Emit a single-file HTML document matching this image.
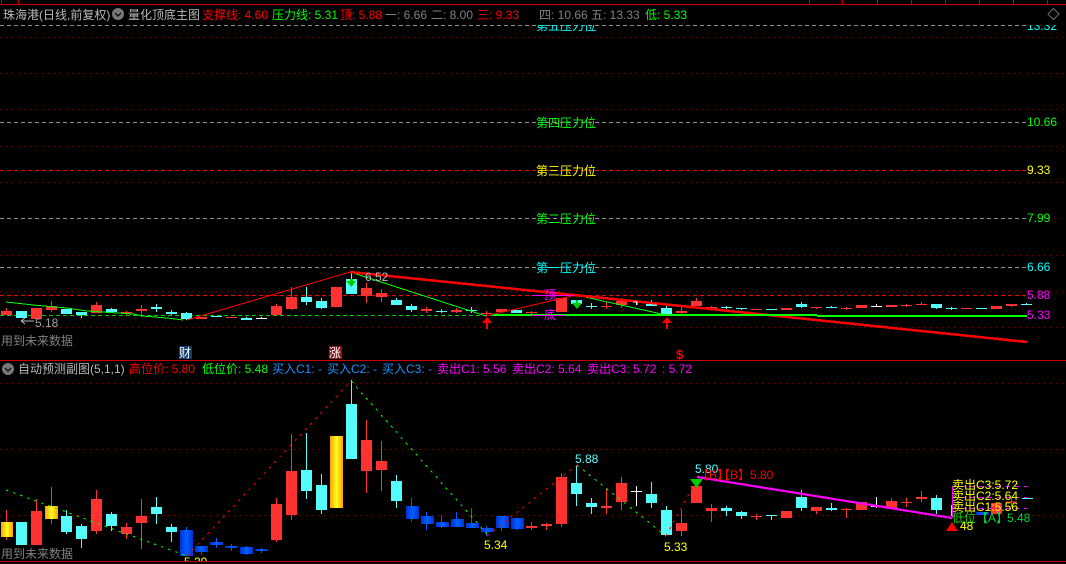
<!DOCTYPE html>
<html><head><meta charset="utf-8"><title>珠海港</title>
<style>
html,body{margin:0;padding:0;background:#000;width:1066px;height:564px;overflow:hidden}
svg{display:block;position:absolute;left:0;top:0}
text{font-family:"Liberation Sans","WenQuanYi Zen Hei","Noto Sans CJK SC",sans-serif;font-size:12px}
.r{fill:#f00}.g{fill:#0f0}.h{fill:#808080}.l{fill:#b8b8b8}.b{fill:#1e90ff}.m{fill:#f0f}.c{fill:#0ff}.y{fill:#ff0}
</style></head><body>
<svg width="1066" height="564" viewBox="0 0 1066 564">
<defs>
<linearGradient id="gold"><stop offset="0" stop-color="#ffa000"/><stop offset=".5" stop-color="#ffff20"/><stop offset="1" stop-color="#ffa000"/></linearGradient>
<linearGradient id="blue"><stop offset="0" stop-color="#0030d8"/><stop offset=".5" stop-color="#0060ff"/><stop offset="1" stop-color="#0030d8"/></linearGradient>
<clipPath id="ct"><rect x="0" y="25" width="1066" height="20"/></clipPath>
<clipPath id="cb"><rect x="0" y="540" width="1066" height="21"/></clipPath>
</defs>
<rect width="1066" height="564" fill="#000"/>
<!-- frame -->
<g shape-rendering="crispEdges" stroke="#c80000" fill="none">
<path d="M0 4.500H1066M0 360.500H1066M0 561.500H1066"/>
<path d="M1.500 0V4M18.500 0V4M809.500 0V4M842.500 0V4M877.500 0V4M911.500 0V4M945.500 0V4M979.500 0V4M1013.500 0V4M1047.500 0V4"/>
</g>
<!-- grid -->
<g shape-rendering="crispEdges" fill="none">
<path stroke="#800000" stroke-dasharray="1 5" d="M0 37.500H1066M0 73.500H1066M0 109.500H1066M0 146.500H1066M0 182.500H1066M1030 218.500H1066M0 255.500H1066M0 291.500H1066M0 327.500H1066M0 383.500H1066M0 449.500H1066M0 515.500H1066"/>
<path stroke="#909090" stroke-dasharray="4 3" d="M0 25.500H1027M0 122.500H1027M0 218.500H1027M0 267.500H1027"/>
<path stroke="#f00" stroke-dasharray="4 3" d="M0 170.500H1027M0 295.500H1027"/>
<path stroke="#0c0" stroke-dasharray="4 3" d="M0 315.500H1027"/>
</g>
<!-- top wicks + bodies -->
<g shape-rendering="crispEdges" fill="none">
<path stroke="#ff3232" d="M6.500 308V315M51.500 301V312M96.500 302V313M141.500 305V317M126.500 311V315M276.500 304V315M291.500 287V310M336.500 287V307M366.500 283V303M381.500 289V302M426.500 307V313M456.500 308V313M486.500 311V316M531.500 311V314M606.500 302V309M621.500 298V308M681.500 307V314M696.500 298V306M711.500 306V310M816.500 307V309M846.500 307V310M906.500 304V307M921.500 302V305M1011.500 304V307"/>
<path stroke="#54fcfc" d="M81.500 312V318M111.500 308V312M156.500 304V312M171.500 310V315M186.500 312V320M246.500 317V320M306.500 287V305M321.500 298V309M351.500 272V294M396.500 298V305M411.500 304V312M441.500 309V313M471.500 307V313M591.500 303V309M651.500 300V306M666.500 306V314M726.500 306V309M741.500 308V310M801.500 302V308M831.500 306V308M936.500 304V309M951.500 307V310M1026.500 303V305"/>
<path stroke="#fff" d="M876.500 304V307M636.500 302V305M261.500 317V319"/>
<path stroke="#ff3232" stroke-width="11" d="M6.500 311V315M36.500 308V319M51.500 306V310M96.500 305V313M126.500 312V314M141.500 309V311M201.500 317V319M231.500 317V318M276.500 306V315M291.500 297V309M336.500 287V307M366.500 288V296M381.500 293V297M426.500 309V311M456.500 310V312M486.500 313V314M501.500 309V312M531.500 312V313M561.500 298V312M606.500 306V307M621.500 301V305M681.500 311V313M696.500 301V306M711.500 307V309M756.500 309V310M786.500 308V310M816.500 307V308M846.500 308V309M861.500 305V308M891.500 305V307M906.500 305V306M921.500 304V305M966.500 308V309M996.500 306V309M1011.500 304V306"/>
<path stroke="#54fcfc" stroke-width="11" d="M21.500 311V318M66.500 309V314M81.500 312V315M111.500 309V312M156.500 307V309M171.500 312V314M186.500 313V319M216.500 316V317M246.500 318V320M306.500 297V302M321.500 301V308M351.500 279V294M396.500 300V305M411.500 306V310M441.500 311V312M471.500 310V311M516.500 310V313M576.500 300V304M591.500 306V307M651.500 304V306M666.500 308V314M726.500 307V308M741.500 308V309M771.500 309V310M801.500 304V307M831.500 307V308M936.500 304V308M951.500 308V309M981.500 308V309M1026.500 304V305"/>
<path stroke="#fff" stroke-width="11" d="M261.500 318V319M876.500 306V307"/>
</g>
<!-- top lines -->
<g fill="none" shape-rendering="crispEdges">
<polyline stroke="#0f0" stroke-width="1" points="6,302 33,305 67,308 87,311 133,314 143,316 167,318 183,320"/>
<polyline stroke="#f00" stroke-width="1" points="187,320 350,272"/>
<polyline stroke="#0f0" stroke-width="1" points="350,272 486,316"/>
<polyline stroke="#f00" stroke-width="1" points="486,316 576,295"/>
<polyline stroke="#0f0" stroke-width="1" points="576,295 666,315"/>
<polyline stroke="#f00" stroke-width="2.500" points="350,272 720,310 1027,342"/>
<rect x="493" y="314" width="324" height="2" fill="#0f0"/>
<rect x="817" y="315" width="210" height="2" fill="#0f0"/>
<path stroke="#f0f" d="M532 295.500H574M532 315.500H566"/>
</g>
<!-- arrows -->
<path fill="#f00" d="M487 317L492 323H488V329H486V323H482Z"/>
<path fill="#f00" d="M667 317L672 323H668V329H666V323H662Z"/>
<path fill="#0c0" d="M350 279H353V281H356L351.500 287L346 281H350Z"/>
<path fill="#0c0" d="M576 300H578V303H582L577 309L572 303H576Z"/>
<path stroke="#fff" fill="none" shape-rendering="crispEdges" d="M633 302H637V305"/>
<!-- top labels -->
<text x="3" y="19" class="l">珠海港(日线,前复权)</text>
<circle cx="118" cy="14" r="6" fill="#787878"/><path d="M115 13l3 3 3-3" stroke="#111" stroke-width="1.400" fill="none"/>
<text x="128" y="19" class="l">量化顶底主图</text>
<text x="202" y="19" class="r">支撑线: 4.60</text>
<text x="272" y="19" class="g">压力线: 5.31</text>
<text x="340" y="19" class="r">顶: 5.88</text>
<text x="385" y="19" class="h">一: 6.66</text>
<text x="431" y="19" class="h">二: 8.00</text>
<text x="477" y="19" class="r">三: 9.33</text>
<text x="539" y="19" class="h">四: 10.66</text>
<text x="591" y="19" class="h">五: 13.33</text>
<text x="645" y="19" class="g">低: 5.33</text>
<path d="M1053.500 8.500l5.500 5.500-5.500 5.500-5.500-5.500z" stroke="#707070" fill="none"/>
<g clip-path="url(#ct)"><text x="536" y="30" class="c">第五压力位</text><text x="1027" y="30" class="c">13.32</text></g>
<text x="536" y="127" class="g">第四压力位</text><text x="1027" y="126" class="g">10.66</text>
<text x="536" y="175" class="y">第三压力位</text><text x="1027" y="174" class="y">9.33</text>
<text x="536" y="223" class="g">第二压力位</text><text x="1027" y="222" class="g">7.99</text>
<text x="536" y="272" class="c">第一压力位</text><text x="1027" y="271" class="c">6.66</text>
<text x="1027" y="299" class="m">5.88</text>
<text x="1027" y="319" class="m">5.33</text>
<text x="544" y="299" class="m">顶</text>
<text x="544" y="319" class="m">底</text>
<text x="365" y="281" fill="#b8b8b8">6.52</text>
<path d="M21 321H34M21 321l4-3M21 321l4 3" stroke="#b8b8b8" fill="none"/>
<text x="35" y="327" fill="#a0a0a0">5.18</text>
<text x="1" y="345" class="h">用到未来数据</text>
<rect x="179" y="346" width="13" height="13" fill="#103c70"/><text x="179" y="357" fill="#fff">财</text>
<rect x="329" y="346" width="13" height="13" fill="#8a1414"/><text x="329" y="357" fill="#fff">涨</text>
<text x="676" y="359" fill="#f00" font-weight="bold" style="font-size:13px">$</text>
<!-- bottom candles -->
<g shape-rendering="crispEdges" fill="none">
<path stroke="#ff3232" d="M6.500 510V540M36.500 499V545M51.500 487V524M96.500 490V534M126.500 523V539M141.500 499V549M276.500 498V542M291.500 434V520M366.500 420V493M381.500 441V491M531.500 522V530M546.500 523V530M561.500 473V527M606.500 489V514M621.500 477V510M681.500 510V536M711.500 504V522M756.500 514V520M816.500 507V514M846.500 508V518M891.500 498V509M906.500 498V507M921.500 491V502M1011.500 497V507"/>
<path stroke="#54fcfc" d="M66.500 510V534M81.500 524V548M111.500 512V531M156.500 497V524M171.500 524V542M306.500 433V499M321.500 474V514M351.500 380V459M396.500 475V508M576.500 465V506M591.500 498V514M651.500 482V508M666.500 506V535M726.500 506V516M741.500 511V519M771.500 515V520M801.500 490V511M831.500 503V511M936.500 495V514M951.500 505V516"/>
<path stroke="#fff" d="M636.500 486V506M876.500 497V508"/>
<path stroke="#0060ff" d="M186.500 527V556M201.500 546V555M216.500 538V548M231.500 544V551M246.500 546V555M261.500 548V553M411.500 498V522M426.500 512V530M441.500 515V528M456.500 512V527M471.500 508V528M486.500 526V536M501.500 516V531M516.500 518V530"/>
<path stroke="#ff3232" stroke-width="11" d="M36.500 511V545M96.500 499V531M126.500 527V534M141.500 516V523M276.500 504V540M291.500 471V515M366.500 440V471M381.500 461V470M531.500 526V528M546.500 524V526M561.500 477V524M606.500 506V508M621.500 483V502M681.500 523V531M696.500 486V503M711.500 508V511M756.500 516V517M786.500 511V518M816.500 507V511M846.500 509V510M861.500 502V510M891.500 501V509M906.500 502V503M921.500 497V499M996.500 503V514"/>
<path stroke="#54fcfc" stroke-width="11" d="M21.500 522V545M66.500 516V532M81.500 526V539M111.500 514V526M156.500 507V514M171.500 527V532M306.500 470V491M321.500 485V510M351.500 404V459M396.500 481V501M576.500 483V494M591.500 503V507M651.500 494V503M666.500 510V535M726.500 508V511M741.500 512V516M771.500 515V516M801.500 497V508M831.500 508V510M936.500 498V510"/>
<path stroke="#54fcfc" stroke-width="11" d="M1027.500 498V499"/>
<path stroke="#fff" stroke-width="11" d="M636.500 491V492M876.500 506V507"/>
<path stroke="#ff3232" d="M1006 502H1017"/>
<g stroke="none">
<rect x="1" y="522" width="12" height="15" fill="url(#gold)"/>
<rect x="45" y="506" width="13" height="13" fill="url(#gold)"/>
<rect x="330" y="436" width="13" height="72" fill="url(#gold)"/>
<rect x="180" y="530" width="13" height="26" fill="url(#blue)"/>
<rect x="195" y="546" width="13" height="6" fill="url(#blue)"/>
<rect x="210" y="542" width="13" height="3" fill="url(#blue)"/>
<rect x="225" y="546" width="13" height="2" fill="url(#blue)"/>
<rect x="240" y="547" width="13" height="7" fill="url(#blue)"/>
<rect x="255" y="549" width="13" height="2" fill="url(#blue)"/>
<rect x="406" y="506" width="13" height="13" fill="url(#blue)"/>
<rect x="421" y="516" width="13" height="8" fill="url(#blue)"/>
<rect x="436" y="522" width="13" height="5" fill="url(#blue)"/>
<rect x="451" y="519" width="13" height="8" fill="url(#blue)"/>
<rect x="466" y="523" width="13" height="5" fill="url(#blue)"/>
<rect x="481" y="528" width="13" height="4" fill="url(#blue)"/>
<rect x="496" y="516" width="13" height="12" fill="url(#blue)"/>
<rect x="511" y="518" width="13" height="11" fill="url(#blue)"/>
<rect x="976" y="512" width="13" height="3" fill="url(#blue)"/>
</g>
</g>
<!-- bottom zigzag -->
<g fill="none" stroke-width="1" stroke-dasharray="2.500 5" shape-rendering="crispEdges">
<polyline stroke="#0f0" points="6,490 187,556"/>
<polyline stroke="#f00" points="187,556 351,381"/>
<polyline stroke="#0f0" points="351,381 487,534"/>
<polyline stroke="#f00" points="487,536 577,465"/>
<polyline stroke="#0f0" points="577,465 666,536"/>
<polyline stroke="#f00" points="666,536 696,481"/>
</g>
<polyline fill="none" stroke="#f0f" stroke-width="2.200" shape-rendering="crispEdges" points="697,477 952,518"/>
<path d="M690 479H703L696.500 488Z" fill="#0c0"/>
<path d="M952 522L958 531H946Z" fill="#f00"/>
<path stroke="#f0f" fill="none" shape-rendering="crispEdges" stroke-dasharray="4 5" d="M952 486.500H1027M952 497.500H1027M952 508.500H1027"/>
<path stroke="#f0f" fill="none" shape-rendering="crispEdges" d="M952.500 486V518"/>
<!-- bottom labels -->
<circle cx="8" cy="369" r="6" fill="#787878"/><path d="M5 368l3 3 3-3" stroke="#111" stroke-width="1.400" fill="none"/>
<text x="18" y="373" class="l">自动预测副图(5,1,1)</text>
<text x="129" y="373" class="r">高位价: 5.80</text>
<text x="202" y="373" class="g">低位价: 5.48</text>
<text x="272" y="373" class="b">买入C1: -</text>
<text x="327" y="373" class="b">买入C2: -</text>
<text x="382" y="373" class="b">买入C3: -</text>
<text x="437" y="373" class="m">卖出C1: 5.56</text>
<text x="512" y="373" class="m">卖出C2: 5.64</text>
<text x="587" y="373" class="m">卖出C3: 5.72</text>
<text x="662" y="373" class="m">: 5.72</text>
<text x="1" y="558" class="h">用到未来数据</text>
<g clip-path="url(#cb)"><text x="184" y="566" class="y">5.29</text></g>
<text x="484" y="549" class="y">5.34</text>
<text x="664" y="551" class="y">5.33</text>
<text x="575" y="463" fill="#54fcfc">5.88</text>
<text x="695" y="473" fill="#54fcfc">5.80</text>
<text x="697" y="479" class="r">【B】</text>
<text x="718" y="479" class="r">【B】5.80</text>
<text x="952" y="489" class="y">卖出C3:5.72</text>
<text x="952" y="500" class="y">卖出C2:5.64</text>
<text x="952" y="511" class="y">卖出C1:5.56</text>
<text x="952" y="522" fill="#00d000">低位</text>
<text x="976" y="522" fill="#00d040">【A】</text>
<text x="1007" y="522" fill="#00d040">5.48</text>
<text x="960" y="530" class="y">48</text>
</svg>
</body></html>
